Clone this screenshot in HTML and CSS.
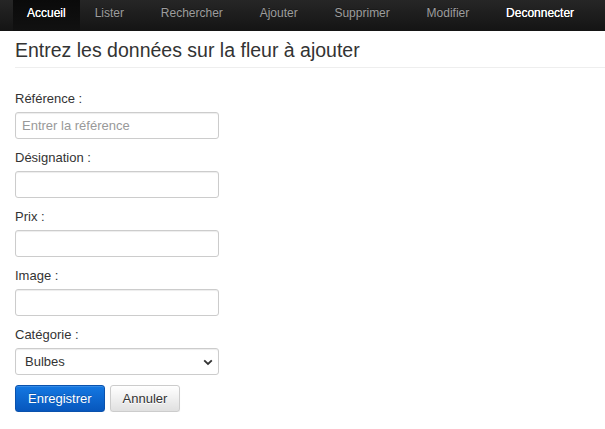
FILE: index.html
```html
<!DOCTYPE html>
<html lang="fr">
<head>
<meta charset="utf-8">
<title>Ajouter une fleur</title>
<link rel="stylesheet" href="styles.css">
</head>
<body>
<nav class="navbar">
  <ul class="nav">
    <li class="nav-item active first"><a href="#">Accueil</a></li>
    <li class="nav-item second"><a href="#">Lister</a></li>
    <li class="nav-item"><a href="#">Rechercher</a></li>
    <li class="nav-item"><a href="#">Ajouter</a></li>
    <li class="nav-item"><a href="#">Supprimer</a></li>
    <li class="nav-item"><a href="#">Modifier</a></li>
    <li class="nav-item strong"><a href="#">Deconnecter</a></li>
  </ul>
</nav>
<main class="container">
  <h1 class="page-title">Entrez les données sur la fleur à ajouter</h1>
  <form class="form">
    <div class="group">
      <label class="label" for="ref">Référence :</label>
      <input class="control" id="ref" type="text" placeholder="Entrer la référence">
    </div>
    <div class="group">
      <label class="label" for="des">Désignation :</label>
      <input class="control" id="des" type="text">
    </div>
    <div class="group">
      <label class="label" for="prix">Prix :</label>
      <input class="control" id="prix" type="text">
    </div>
    <div class="group">
      <label class="label" for="img">Image :</label>
      <input class="control" id="img" type="text">
    </div>
    <div class="group">
      <label class="label" for="cat">Catégorie :</label>
      <div class="select-wrap">
        <select class="control select" id="cat">
          <option>Bulbes</option>
          <option>Rosiers</option>
          <option>Plantes vertes</option>
        </select>
        <svg class="chev" width="10" height="7" viewBox="0 0 10 7"><path d="M1.2 1.3 L5 5 L8.8 1.3" fill="none" stroke="#333" stroke-width="1.8"/></svg>
      </div>
    </div>
    <div class="actions">
      <button type="submit" class="btn btn-primary">Enregistrer</button>
      <button type="reset" class="btn btn-default">Annuler</button>
    </div>
  </form>
</main>
</body>
</html>
```

FILE: styles.css
```css
* { box-sizing: border-box; }
html, body { margin: 0; padding: 0; background: #fff; }
body {
  font-family: "Liberation Sans", Arial, sans-serif;
  color: #333;
  font-size: 13px;
}
.navbar {
  background: linear-gradient(to bottom, #262626 0%, #141414 100%);
  height: 31px;
  padding-left: 13px;
}
.nav {
  list-style: none;
  margin: 0;
  padding: 0;
  display: flex;
  height: 100%;
}
.nav-item a {
  display: block;
  height: 31px;
  padding: 6px 18.4px 11px;
  line-height: 14px;
  font-size: 12px;
  color: #9d9d9d;
  text-decoration: none;
  text-shadow: 0 -1px 0 rgba(0,0,0,.25);
}
.nav-item.first a { padding-left: 14px; padding-right: 14px; }
.nav-item.second a { padding-left: 15px; }
.nav-item.active a {
  background: linear-gradient(to bottom, #0a0a0a 0%, #111 100%);
  color: #fff;
  text-shadow: 0 0 0.6px #fff;
}
.nav-item.strong a {
  color: #fff;
  text-shadow: 0 0 0.6px #fff;
}
.container {
  padding-left: 15px;
}
.page-title {
  margin: 8px 0 23px;
  padding-bottom: 6px;
  border-bottom: 1px solid #eee;
  font-size: 19.5px;
  line-height: 22px;
  font-weight: normal;
  color: #333;
}
.form { margin: 0; }
.group { margin-bottom: 11px; }
.label {
  display: block;
  font-size: 13px;
  line-height: 15px;
  margin-bottom: 6px;
  color: #333;
}
.control {
  display: block;
  width: 204px;
  height: 27px;
  padding: 4px 6px;
  font-family: "Liberation Sans", Arial, sans-serif;
  font-size: 13px;
  color: #555;
  background: #fff;
  border: 1px solid #ccc;
  border-radius: 3px;
  box-shadow: inset 0 1px 1px rgba(0,0,0,.075);
  outline: none;
}
.control::placeholder { color: #999; }
.select-wrap { position: relative; width: 204px; }
.select {
  appearance: none;
  -webkit-appearance: none;
  padding-left: 9px;
  color: #333;
}
.chev { position: absolute; right: 6px; top: 11px; pointer-events: none; }
.actions {
  display: flex;
  gap: 5px;
  margin-top: -1px;
}
.btn {
  height: 27px;
  padding: 0 12px;
  font-family: "Liberation Sans", Arial, sans-serif;
  font-size: 13px;
  line-height: 25px;
  border-radius: 3px;
  cursor: pointer;
}
.btn-primary {
  color: #fff;
  background: linear-gradient(to bottom, #1478e2 0%, #0757bd 100%);
  border: 1px solid #0a52ad;
  text-shadow: 0 -1px 0 rgba(0,0,0,.2);
  box-shadow: inset 0 1px 0 rgba(255,255,255,.15), 0 1px 1px rgba(0,0,0,.075);
}
.btn-default {
  color: #333;
  background: linear-gradient(to bottom, #fff 0%, #e0e0e0 100%);
  border: 1px solid #ccc;
  text-shadow: 0 1px 0 #fff;
  box-shadow: inset 0 1px 0 rgba(255,255,255,.15), 0 1px 1px rgba(0,0,0,.075);
}
```
